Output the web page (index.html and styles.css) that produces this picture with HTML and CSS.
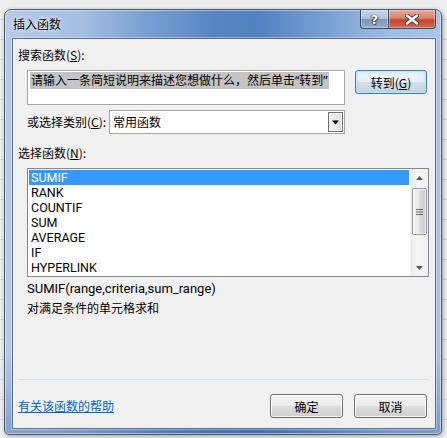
FILE: index.html
```html
<!DOCTYPE html>
<html lang="zh-CN">
<head>
<meta charset="utf-8">
<title>插入函数</title>
<link rel="stylesheet" href="styles.css">
</head>
<body>
<div class="window">
  <div class="titlebar">
    <span class="title">插入函数</span>
    <div class="caption-btns">
      <div class="cap help">?</div>
      <div class="cap close">
        <svg width="14" height="11" viewBox="0 0 14 11"><path d="M2 1.5 L12 9.5 M12 1.5 L2 9.5" stroke="#3b3b3b" stroke-width="4.2" stroke-linecap="round"/><path d="M2 1.5 L12 9.5 M12 1.5 L2 9.5" stroke="#ffffff" stroke-width="2.4" stroke-linecap="round"/></svg>
      </div>
    </div>
  </div>
  <div class="panel">
    <div class="label label-search">搜索函数(<u>S</u>):</div>
    <div class="search-row">
      <div class="textarea"><span class="sel">请输入一条简短说明来描述您想做什么，然后单击“转到”</span></div>
      <div class="btn default">转到(<u>G</u>)</div>
    </div>
    <div class="cat-row">
      <span class="cat-label">或选择类别(<u>C</u>):</span>
      <div class="select">
        <span class="select-text">常用函数</span>
        <div class="drop"><svg width="7" height="5" viewBox="0 0 7 5"><path d="M0 0.5 H7 L3.5 4.5 Z" fill="#000"/></svg></div>
      </div>
    </div>
    <div class="label label-list">选择函数(<u>N</u>):</div>
    <div class="list">
      <div class="items">
        <div class="item selected">SUMIF</div>
        <div class="item">RANK</div>
        <div class="item">COUNTIF</div>
        <div class="item">SUM</div>
        <div class="item">AVERAGE</div>
        <div class="item">IF</div>
        <div class="item">HYPERLINK</div>
      </div>
      <div class="scrollbar">
        <div class="arrow"><svg width="7" height="4" viewBox="0 0 7 4"><path d="M0 4 H7 L3.5 0 Z" fill="#555"/></svg></div>
        <div class="track">
          <div class="thumb">
            <svg width="7" height="8" viewBox="0 0 7 8"><path d="M0 1.5 H7 M0 4 H7 M0 6.5 H7" stroke="#6a6a6a" stroke-width="1"/></svg>
          </div>
        </div>
        <div class="arrow"><svg width="7" height="4" viewBox="0 0 7 4"><path d="M0 0 H7 L3.5 4 Z" fill="#555"/></svg></div>
      </div>
    </div>
    <div class="syntax">SUMIF(range,criteria,sum_range)</div>
    <div class="desc">对满足条件的单元格求和</div>
    <div class="footer">
      <div class="sep"></div>
      <div class="bottom-row">
        <a class="help-link" href="#">有关该函数的帮助</a>
        <div class="btns">
          <div class="btn">确定</div>
          <div class="btn">取消</div>
        </div>
      </div>
    </div>
  </div>
</div>
</body>
</html>
```
FILE: styles.css
```css
html, body {
  margin: 0;
  padding: 0;
}
body {
  width: 447px;
  height: 438px;
  box-sizing: border-box;
  padding: 9px 0 0 4px;
  background: repeating-linear-gradient(to bottom, #eeeeee 0 19px, #d4d4d4 19px 20px);
  font-family: "Noto Sans", "Noto Sans CJK SC", sans-serif;
  font-size: 12px;
  color: #000;
  overflow: hidden;
}
.window {
  width: 438px;
  height: 426px;
  box-sizing: border-box;
  border: 1px solid #4a5a70;
  border-radius: 7px 7px 5px 5px;
  padding: 0 5px 5px 7px;
  display: flex;
  flex-direction: column;
  background:
    linear-gradient(to bottom, rgba(255,255,255,0) 0%, rgba(255,255,255,0) 80%, rgba(40,80,160,0.35) 100%),
    linear-gradient(to right, #b6cbe6 0%, #a3bee1 18%, #7aa0d2 32%, #5885c2 48%, #5282c1 58%, #7aa0d3 74%, #9fbce2 88%, #a9c4e6 100%);
  box-shadow: inset 0 0 0 1px rgba(255,255,255,0.45), 1px 1px 4px rgba(0,0,0,0.35);
}
.titlebar {
  height: 28px;
  display: flex;
  justify-content: space-between;
  align-items: flex-start;
}
.title {
  padding: 6px 0 0 1px;
  font-family: "Noto Sans CJK SC", sans-serif;
  font-size: 12px;
  line-height: 16px;
  color: #000;
  text-shadow: 0 0 6px rgba(255,255,255,0.9), 0 0 3px rgba(255,255,255,0.8);
}
.caption-btns {
  display: flex;
}
.cap {
  height: 19px;
  box-sizing: border-box;
  border: 1px solid #3b4a5e;
  border-top: none;
  display: flex;
  align-items: center;
  justify-content: center;
  box-shadow: inset 0 0 0 1px rgba(255,255,255,0.35);
}
.help {
  width: 28px;
  border-radius: 0 0 0 4px;
  border-right: none;
  background: linear-gradient(to bottom, #c9d8ea 0%, #aebfd6 48%, #7e98bb 52%, #93add0 100%);
  color: #fff;
  font-family: "DejaVu Sans", sans-serif;
  font-weight: bold;
  font-size: 13px;
  line-height: 19px;
  text-shadow: 0 0 1px #333, 0 0 1px #333, 1px 1px 0 #556, -1px 0 0 #556;
}
.close {
  width: 48px;
  border-radius: 0 0 4px 0;
  background: linear-gradient(to bottom, #e9a796 0%, #d98571 45%, #c3432b 55%, #d26a52 100%);
}
.panel {
  flex: 1;
  box-sizing: border-box;
  border: 1px solid #5b6f88;
  background: #f0f0f0;
  padding: 0 6px 10px 5px;
  display: flex;
  flex-direction: column;
  box-shadow: 0 0 0 1px rgba(255,255,255,0.35);
  font-family: "Noto Sans CJK SC", sans-serif;
}
.label {
  line-height: 16px;
  height: 16px;
}
.label-search {
  margin-top: 8px;
}
u {
  text-decoration: underline;
  text-underline-offset: 1px;
}
.search-row {
  margin-top: 7px;
  display: flex;
  align-items: flex-start;
  padding-left: 9px;
}
.textarea {
  width: 318px;
  height: 35px;
  box-sizing: border-box;
  border: 1px solid #a5a5a5;
  background: #fff;
  padding: 2px 0 0 2px;
  line-height: 14px;
  white-space: nowrap;
}
.sel {
  background: #c4c4c4;
  padding: 0 1px;
  font-family: "Noto Sans", "Noto Sans CJK SC", sans-serif;
}
.btn {
  width: 73px;
  height: 24px;
  box-sizing: border-box;
  border: 1px solid #707070;
  border-radius: 3px;
  background: linear-gradient(to bottom, #f2f2f2 0%, #ebebeb 50%, #dddddd 51%, #cfcfcf 100%);
  box-shadow: inset 0 0 0 1px rgba(255,255,255,0.75);
  display: flex;
  align-items: center;
  justify-content: center;
  line-height: 16px;
  padding-top: 1px;
}
.btn.default {
  width: 72px;
  margin-left: 10px;
  border-color: #3c7fb1;
  box-shadow: inset 0 0 0 1px #bfe6f8, inset 0 0 3px 1px rgba(120,200,240,0.5);
  background: linear-gradient(to bottom, #f0f5f8 0%, #e6eef3 50%, #d5dfe6 51%, #c9d6df 100%);
}
.cat-row {
  margin-top: 5px;
  padding-left: 9px;
  display: flex;
  align-items: center;
  height: 24px;
}
.cat-label {
  width: 82px;
  line-height: 16px;
}
.select {
  width: 236px;
  height: 24px;
  box-sizing: border-box;
  border: 1px solid #a5a5a5;
  background: #fff;
  display: flex;
  align-items: center;
  justify-content: space-between;
}
.select-text {
  padding-left: 3px;
  line-height: 16px;
}
.drop {
  width: 15px;
  height: 20px;
  margin-right: 1px;
  box-sizing: border-box;
  border: 1px solid #6f6f6f;
  background: linear-gradient(to right, #f4f4f4, #dcdcdc);
  box-shadow: inset 0 0 0 1px #fafafa;
  display: flex;
  align-items: center;
  justify-content: center;
}
.label-list {
  margin-top: 11px;
}
.list {
  margin-top: 7px;
  margin-left: 9px;
  height: 109px;
  box-sizing: border-box;
  border: 1px solid #828790;
  background: #fff;
  display: flex;
}
.items {
  flex: 1;
  padding: 1px;
  font-family: Roboto, sans-serif;
  font-size: 12.5px;
}
.item {
  height: 15px;
  line-height: 15px;
  padding-left: 2px;
}
.item.selected {
  background: #3399ff;
  color: #fff;
}
.scrollbar {
  width: 17px;
  display: flex;
  flex-direction: column;
  background: linear-gradient(to right, #ebebeb, #f5f5f5 40%, #f0f0f0);
  border-left: 1px solid #f4f4f4;
}
.arrow {
  height: 17px;
  display: flex;
  align-items: center;
  justify-content: center;
}
.track {
  flex: 1;
  padding: 2px 1px 0 1px;
}
.thumb {
  height: 47px;
  box-sizing: border-box;
  border: 1px solid #979797;
  border-radius: 2px;
  background: linear-gradient(to right, #f3f3f3 0%, #e8e8e8 45%, #d6d6d6 55%, #cdcdcd 100%);
  box-shadow: inset 0 0 0 1px rgba(255,255,255,0.7);
  display: flex;
  align-items: center;
  justify-content: center;
}
.syntax {
  margin-top: 4px;
  margin-left: 9px;
  line-height: 16px;
  font-family: Roboto, sans-serif;
  font-size: 13px;
}
.desc {
  margin-top: 3px;
  margin-left: 9px;
  line-height: 16px;
}
.footer {
  margin-top: auto;
}
.sep {
  height: 0;
  border-top: 1px solid #d5dfe5;
}
.bottom-row {
  margin-top: 14px;
  display: flex;
  align-items: center;
  justify-content: space-between;
}
.help-link {
  color: #0066cc;
  text-decoration: underline;
  line-height: 16px;
}
.btns {
  display: flex;
  gap: 11px;
  margin-right: 2px;
}
```
